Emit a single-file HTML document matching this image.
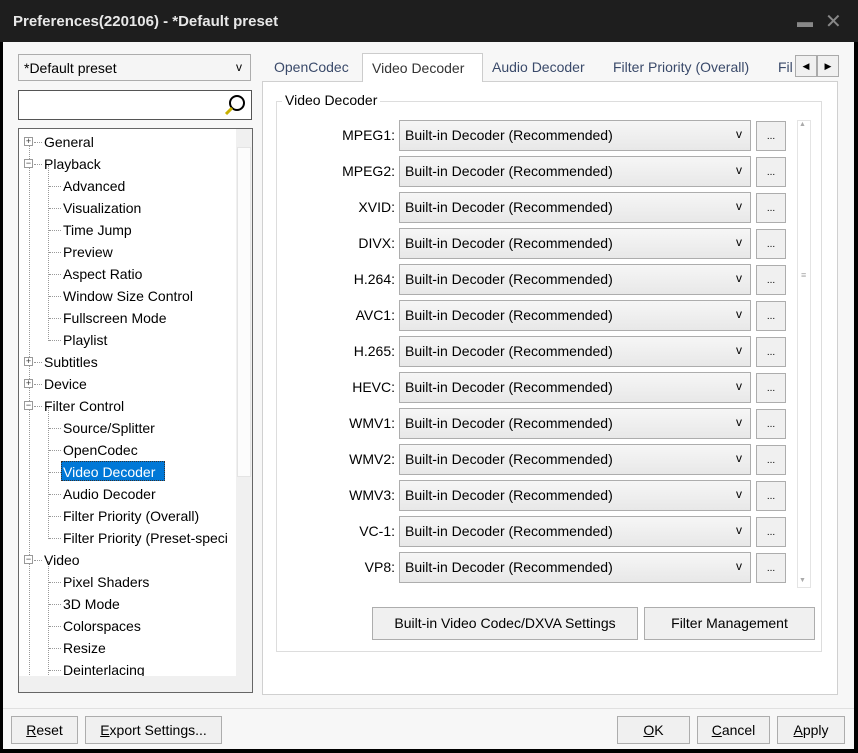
<!DOCTYPE html>
<html><head><style>
*{box-sizing:border-box;margin:0;padding:0}
body{width:858px;height:753px;background:#000;font-family:"Liberation Sans",sans-serif;font-size:14px;color:#000;position:relative;overflow:hidden}
.a{position:absolute}
.title{left:0;top:0;width:858px;height:42px;background:#1e1e1e;color:#e8e8e8;font-weight:bold;font-size:15px;padding:13px 0 0 13px}
.win{left:3px;top:42px;width:851px;height:707px;background:#f7f7f7}
.btn{position:absolute;border:1px solid #adadad;background:#f0f0f0;text-align:center;font-size:14px}
.combo{position:absolute;border:1px solid #adadad;background:linear-gradient(#f6f6f6,#e8e8e8);font-size:14px;padding-left:5px}
.combo .v{position:absolute;right:8px;top:6px;font-size:12px}
.lbl{position:absolute;text-align:right;width:120px;font-size:14px}
.ti{position:absolute;font-size:14px;white-space:nowrap}
.pm{position:absolute;width:9px;height:9px;border:1px solid #999;background:#fff;font-size:9px;line-height:7px;text-align:center;color:#333}
</style></head><body>
<div class="a title">Preferences(220106) - *Default preset</div>
<div class="a" style="left:797px;top:14px;color:#888;font-size:16px">&#9644;</div>
<div class="a" style="left:825px;top:9px;color:#888;font-size:20px">✕</div>
<div class="a win"></div>
<div class="combo" style="left:18px;top:54px;width:233px;height:27px;background:#f5f5f5;padding-top:5px">*Default preset<span class="v" style="top:5px">v</span></div>
<div class="a" style="left:18px;top:90px;width:234px;height:30px;border:1px solid #555;background:#fff"></div>
<svg class="a" style="left:222px;top:93px" width="26" height="24"><circle cx="15" cy="10" r="7" fill="none" stroke="#000" stroke-width="2"/><line x1="10" y1="15" x2="4" y2="21" stroke="#c8b000" stroke-width="3"/></svg>
<div class="a" style="left:18px;top:128px;width:235px;height:565px;border:1px solid #666;background:#fff;overflow:hidden">
<div class="a" style="left:10px;top:14px;height:532px;border-left:1px dotted #999"></div>
<div class="a" style="left:29px;top:36px;height:176px;border-left:1px dotted #999"></div>
<div class="a" style="left:29px;top:278px;height:132px;border-left:1px dotted #999"></div>
<div class="a" style="left:29px;top:432px;height:114px;border-left:1px dotted #999"></div>
<div class="a" style="left:217px;top:0;width:16px;height:547px;background:#f0f0f0;z-index:3"></div>
<div class="a" style="left:218px;top:18px;width:14px;height:330px;background:#fcfcfc;border:1px solid #e4e4e4;z-index:3"></div>
<div class="a" style="left:0;top:547px;width:233px;height:16px;background:#f0f0f0;z-index:3"></div>
</div>
<div id="tree"></div>
<div class="a" style="left:61px;top:461px;width:104px;height:20px;background:#0078d7;border:1px dotted #333"></div>
<div class="a" style="left:262px;top:81px;width:576px;height:614px;border:1px solid #d0d0d0;background:#fff"></div>
<div class="a" style="left:262px;top:55px;width:576px;height:27px;font-size:14px;color:#3a4a6a">
<span class="a" style="left:12px;top:4px">OpenCodec</span>
<span class="a" style="left:100px;top:-2px;width:121px;height:29px;border:1px solid #ccc;border-bottom:none;background:#fff;padding:6px 0 0 9px;color:#333">Video Decoder</span>
<span class="a" style="left:230px;top:4px">Audio Decoder</span>
<span class="a" style="left:351px;top:4px">Filter Priority (Overall)</span>
<span class="a" style="left:516px;top:4px;width:20px;overflow:hidden">Fil</span>
<span class="a" style="left:533px;top:0;width:22px;height:22px;border:1px solid #aaa;background:#f0f0f0;font-size:9px;text-align:center;line-height:20px;color:#000">◀</span>
<span class="a" style="left:555px;top:0;width:22px;height:22px;border:1px solid #aaa;background:#f0f0f0;font-size:9px;text-align:center;line-height:20px;color:#000">▶</span>
</div>
<div class="a" style="left:276px;top:101px;width:546px;height:551px;border:1px solid #ddd"></div>
<div class="a" style="left:282px;top:92px;background:#fff;padding:0 3px;font-size:14px">Video Decoder</div>
<div class="a" style="left:797px;top:120px;width:14px;height:468px;border:1px solid #e4e4e4;background:#fff"></div>
<div class="a" style="left:799px;top:121px;font-size:7px;color:#aaa">▲</div>
<div class="a" style="left:799px;top:577px;font-size:7px;color:#aaa">▼</div>
<div class="a" style="left:801px;top:270px;font-size:9px;color:#aaa">≡</div>
<div id="rows"></div>
<div class="btn" style="left:372px;top:607px;width:266px;height:33px;line-height:31px">Built-in Video Codec/DXVA Settings</div>
<div class="btn" style="left:644px;top:607px;width:171px;height:33px;line-height:31px">Filter Management</div>
<div class="a" style="left:3px;top:708px;width:851px;height:1px;background:#e0e0e0"></div>
<div class="btn" style="left:11px;top:716px;width:67px;height:28px;line-height:26px"><u>R</u>eset</div>
<div class="btn" style="left:85px;top:716px;width:137px;height:28px;line-height:26px"><u>E</u>xport Settings...</div>
<div class="btn" style="left:617px;top:716px;width:73px;height:28px;line-height:26px"><u>O</u>K</div>
<div class="btn" style="left:697px;top:716px;width:73px;height:28px;line-height:26px"><u>C</u>ancel</div>
<div class="btn" style="left:777px;top:716px;width:68px;height:28px;line-height:26px"><u>A</u>pply</div>
<script>
var t=[["General",0,1],["Playback",0,2],["Advanced",1],["Visualization",1],["Time Jump",1],["Preview",1],["Aspect Ratio",1],["Window Size Control",1],["Fullscreen Mode",1],["Playlist",1],["Subtitles",0,1],["Device",0,1],["Filter Control",0,2],["Source/Splitter",1],["OpenCodec",1],["Video Decoder",1,0,1],["Audio Decoder",1],["Filter Priority (Overall)",1],["Filter Priority (Preset-speci",1],["Video",0,2],["Pixel Shaders",1],["3D Mode",1],["Colorspaces",1],["Resize",1],["Deinterlacing",1]];
var h="";t.forEach(function(e,i){var y=133+i*22;var x=e[1]?63:44;
if(!e[1])h+='<div class="pm" style="left:24px;top:'+(y+4)+'px">'+(e[2]==1?'+':'−')+'</div><div class="a" style="left:34px;top:'+(y+9)+'px;width:8px;border-top:1px dotted #999"></div>';
else h+='<div class="a" style="left:49px;top:'+(y+9)+'px;width:12px;border-top:1px dotted #999"></div>';
h+='<div class="ti" style="left:'+x+'px;top:'+(y+1)+'px;'+(e[3]?'color:#fff;z-index:2':'')+'">'+e[0]+'</div>';});
document.getElementById("tree").innerHTML=h;
var r=["MPEG1","MPEG2","XVID","DIVX","H.264","AVC1","H.265","HEVC","WMV1","WMV2","WMV3","VC-1","VP8"];h="";
r.forEach(function(n,i){var y=120+i*36;
h+='<div class="lbl" style="left:275px;top:'+(y+7)+'px">'+n+':</div><div class="combo" style="left:399px;top:'+y+'px;width:352px;height:31px;padding-top:6px">Built-in Decoder (Recommended)<span class="v">v</span></div><div class="btn" style="left:756px;top:'+(y+1)+'px;width:30px;height:30px;font-size:10px;line-height:30px">...</div>';});
document.getElementById("rows").innerHTML=h;
</script>
</body></html>
